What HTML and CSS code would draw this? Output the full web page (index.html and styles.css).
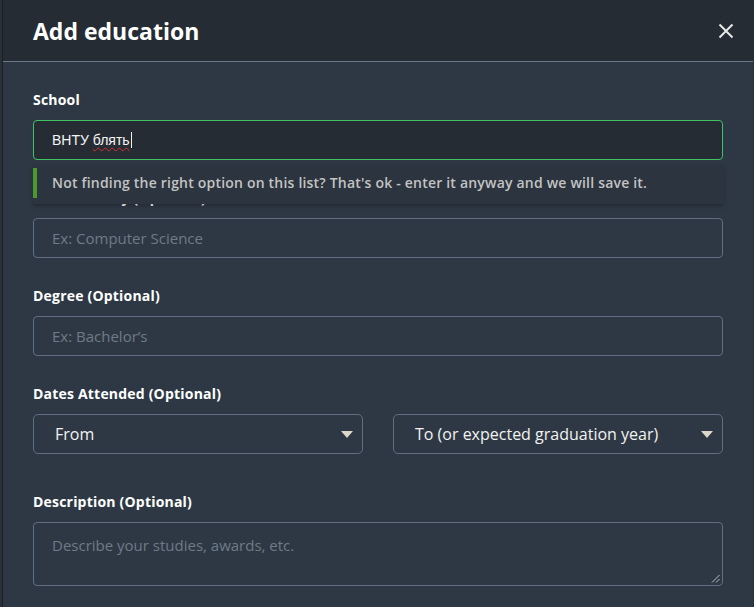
FILE: index.html
```html
<!DOCTYPE html>
<html lang="en">
<head>
    <meta charset="UTF-8">
    <meta name="viewport" content="width=device-width, initial-scale=1.0">
    <title>Add education</title>
    <link rel="stylesheet" href="styles.css">
</head>
<body>

    <div class="page">
        <div class="backdrop-edge"></div>

        <!-- Modal -->
        <div class="modal">
            <header class="modal-header">
                <h1>Add education</h1>
                <button class="close-btn" aria-label="Close">
                    <svg width="16" height="16" viewBox="0 0 16 16">
                        <path d="M1.5 1.5 L14.5 14.5 M14.5 1.5 L1.5 14.5" stroke="#e6e6e6" stroke-width="2" fill="none"/>
                    </svg>
                </button>
            </header>

            <div class="modal-body">
                <div class="field school-field">
                    <label>School</label>
                    <div class="input focused">
                        <span class="typed">ВНТУ <span class="misspelled">блять</span></span><span class="caret"></span>
                    </div>
                    <!-- Autocomplete hint -->
                    <div class="suggest">
                        <p>Not finding the right option on this list? That's ok - enter it anyway and we will save it.</p>
                    </div>
                </div>

                <div class="field">
                    <label>Field of study (Optional)</label>
                    <div class="input"><span class="placeholder">Ex: Computer Science</span></div>
                </div>

                <div class="field">
                    <label>Degree (Optional)</label>
                    <div class="input"><span class="placeholder">Ex: Bachelor’s</span></div>
                </div>

                <div class="field">
                    <label>Dates Attended (Optional)</label>
                    <div class="select-row">
                        <div class="select">
                            <span>From</span>
                            <span class="arrow"></span>
                        </div>
                        <div class="select">
                            <span>To (or expected graduation year)</span>
                            <span class="arrow"></span>
                        </div>
                    </div>
                </div>

                <div class="field description">
                    <label>Description (Optional)</label>
                    <div class="textarea">
                        <span class="placeholder">Describe your studies, awards, etc.</span>
                        <svg class="grip" width="9" height="9" viewBox="0 0 9 9">
                            <path d="M8.5 1 L1 8.5 M8.5 5 L5 8.5" stroke="#b9c0c8" stroke-width="1" fill="none"/>
                        </svg>
                    </div>
                </div>
            </div>
        </div>

        <div class="backdrop-edge right"></div>
    </div>

</body>
</html>
```

FILE: styles.css
```css
/* General Styles */
* {
    margin: 0;
    padding: 0;
    box-sizing: border-box;
}
body {
    background: #1d2227;
    font-family: "Open Sans", Arial, sans-serif;
    color: #fff;
    overflow: hidden;
}

.page {
    display: flex;
    height: 607px;
}
.backdrop-edge {
    width: 3px;
    flex-shrink: 0;
    background: #2a3038;
    border-right: 1px solid #1b1f24;
}
.backdrop-edge.right {
    width: 1px;
    border: none;
    background: #27303a;
}

/* Modal */
.modal {
    flex: 1;
    background: #2e3844;
    display: flex;
    flex-direction: column;
    overflow: hidden;
}
.modal-header {
    flex-shrink: 0;
    height: 62px;
    background: #252c34;
    border-bottom: 1px solid #6a7888;
    display: flex;
    align-items: center;
    justify-content: space-between;
    padding: 0 19px 0 30px;
}
.modal-header h1 {
    font-size: 23px;
    font-weight: 700;
}
.close-btn {
    background: none;
    border: none;
    width: 16px;
    height: 16px;
    display: flex;
}

.modal-body {
    flex-shrink: 0;
    padding: 30px 30px 0 30px;
}

/* Fields */
.field {
    position: relative;
    margin-bottom: 30px;
}
.field label {
    display: block;
    font-size: 14px;
    font-weight: 700;
    letter-spacing: 0.2px;
    line-height: 16px;
    margin-bottom: 12px;
}
.input {
    height: 40px;
    border: 1px solid #5f6f81;
    border-radius: 4px;
    display: flex;
    align-items: center;
    padding: 0 18px;
}
.input.focused {
    background: #252c34;
    border-color: #3fc364;
}
.typed {
    font-family: "Liberation Sans", Arial, sans-serif;
    font-size: 14px;
    color: #f4f4f4;
}
.misspelled {
    text-decoration: underline wavy #d0312d;
    text-decoration-thickness: 1px;
    text-underline-offset: 2px;
}
.caret {
    display: inline-block;
    width: 1px;
    height: 16px;
    background: #f0f0f0;
    margin-left: 1px;
}
.placeholder {
    color: #6f7a86;
    font-size: 15px;
}

/* Autocomplete hint */
.suggest {
    position: absolute;
    left: 0;
    right: -1px;
    top: 73px;
    background: #2b343f;
    box-shadow: 0 2px 4px rgba(0, 0, 0, 0.25);
    padding: 3px 0 6px;
    z-index: 2;
}
.suggest p {
    border-left: 4px solid #4c9a2e;
    padding: 6px 0 6px 15px;
    font-size: 14px;
    font-weight: 600;
    letter-spacing: 0.2px;
    color: #c3c3c3;
    line-height: 18px;
}

/* Selects */
.select-row {
    display: flex;
    gap: 30px;
}
.select {
    flex: 1;
    height: 40px;
    border: 1px solid #5f6f81;
    border-radius: 5px;
    display: flex;
    align-items: center;
    justify-content: space-between;
    padding: 0 9px 0 21px;
    font-size: 16px;
    color: #f2f2f2;
}
.select .arrow {
    width: 0;
    height: 0;
    border-left: 6px solid transparent;
    border-right: 6px solid transparent;
    border-top: 7px solid #dcd6c8;
}

/* Description */
.field.description {
    margin-top: 40px;
}
.textarea {
    position: relative;
    height: 64px;
    border: 1px solid #5f6f81;
    border-radius: 4px;
    padding: 12px 18px;
    line-height: 20px;
}
.grip {
    position: absolute;
    right: 2px;
    bottom: 2px;
}
```
